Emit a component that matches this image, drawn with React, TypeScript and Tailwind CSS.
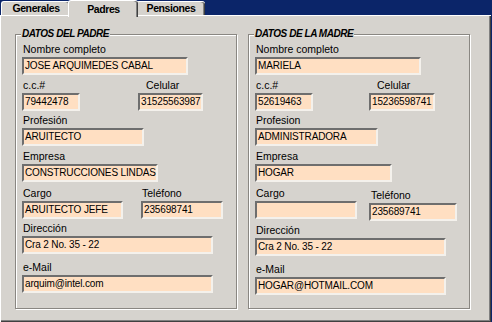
import clsx from 'clsx';

type Field = {
  label: string;
  value: string;
  w: string;
};

function Input({ value, w }: { value: string; w: string }) {
  return (
    <div
      className={clsx(
        'h-[18px] bg-[#ffdfc2] border-2 border-t-[#6e6e6e] border-l-[#6e6e6e] border-b-[#f4f1ec] border-r-[#f4f1ec] pl-px text-[10px] leading-[14px] tracking-[-0.15px] text-black whitespace-nowrap overflow-hidden',
        w,
      )}
    >
      {value}
    </div>
  );
}

function Label({ text, indent = 'pl-px' }: { text: string; indent?: string }) {
  return <div className={clsx('h-[14px] text-[10.5px] leading-[13px] text-black whitespace-nowrap', indent)}>{text}</div>;
}

function Single({ f, mt }: { f: Field; mt: string }) {
  return (
    <div className={mt}>
      <Label text={f.label} />
      <Input value={f.value} w={f.w} />
    </div>
  );
}

function Pair({ a, b, gap, bIndent, bTop = '', mt }: { a: Field; b: Field; gap: string; bIndent: string; bTop?: string; mt: string }) {
  return (
    <div className={clsx('flex', mt)}>
      <div>
        <Label text={a.label} />
        <Input value={a.value} w={a.w} />
      </div>
      <div className={clsx(gap, bTop)}>
        <Label text={b.label} indent={bIndent} />
        <Input value={b.value} w={b.w} />
      </div>
    </div>
  );
}

type Person = {
  title: string;
  nombre: Field;
  cc: Field;
  cel: Field;
  celGap: string;
  prof: Field;
  emp: Field;
  cargo: Field;
  tel: Field;
  telGap: string;
  telIndent: string;
  telTop: string;
  dir: Field;
  mail: Field;
};

function GroupBox({ p }: { p: Person }) {
  return (
    <div className="relative w-[222px] h-[275px] border border-[#8a8782] shadow-[inset_1px_1px_0_#fff,1px_1px_0_#fff] pt-[8px] pl-[6px]">
      <div className="absolute -top-[8px] left-[5px] px-px bg-[#d6d3ce] text-[10px] leading-[14px] font-bold italic tracking-[-0.45px] text-black">
        {p.title}
      </div>
      <Single f={p.nombre} mt="mt-0" />
      <Pair a={p.cc} b={p.cel} gap={p.celGap} bIndent="pl-[8px]" mt="mt-[4px]" />
      <Single f={p.prof} mt="mt-[3px]" />
      <Single f={p.emp} mt="mt-[4px]" />
      <Pair a={p.cargo} b={p.tel} gap={p.telGap} bIndent={p.telIndent} bTop={p.telTop} mt="mt-[5px]" />
      <Single f={p.dir} mt="mt-[3px]" />
      <Single f={p.mail} mt="mt-[7px]" />
    </div>
  );
}

const padre: Person = {
  title: 'DATOS DEL PADRE',
  nombre: { label: 'Nombre completo', value: 'JOSE ARQUIMEDES CABAL', w: 'w-[166px]' },
  cc: { label: 'c.c.#', value: '79442478', w: 'w-[58px]' },
  cel: { label: 'Celular', value: '31525563987', w: 'w-[65px]' },
  celGap: 'ml-[58px]',
  prof: { label: 'Profesión', value: 'ARUITECTO', w: 'w-[122px]' },
  emp: { label: 'Empresa', value: 'CONSTRUCCIONES LINDAS', w: 'w-[136px]' },
  cargo: { label: 'Cargo', value: 'ARUITECTO JEFE', w: 'w-[101px]' },
  tel: { label: 'Teléfono', value: '235698741', w: 'w-[82px]' },
  telGap: 'ml-[18px]',
  telIndent: 'pl-px',
  telTop: 'mt-0',
  dir: { label: 'Dirección', value: 'Cra 2 No. 35 - 22', w: 'w-[191px]' },
  mail: { label: 'e-Mail', value: 'arquim@intel.com', w: 'w-[191px]' },
};

const madre: Person = {
  title: 'DATOS DE LA MADRE',
  nombre: { label: 'Nombre completo', value: 'MARIELA', w: 'w-[166px]' },
  cc: { label: 'c.c.#', value: '52619463', w: 'w-[58px]' },
  cel: { label: 'Celular', value: '15236598741', w: 'w-[66px]' },
  celGap: 'ml-[56px]',
  prof: { label: 'Profesion', value: 'ADMINISTRADORA', w: 'w-[123px]' },
  emp: { label: 'Empresa', value: 'HOGAR', w: 'w-[137px]' },
  cargo: { label: 'Cargo', value: '', w: 'w-[102px]' },
  tel: { label: 'Teléfono', value: '235689741', w: 'w-[88px]' },
  telGap: 'ml-[12px]',
  telIndent: 'pl-[2px]',
  telTop: 'mt-[2px]',
  dir: { label: 'Dirección', value: 'Cra 2 No. 35 - 22', w: 'w-[191px]' },
  mail: { label: 'e-Mail', value: 'HOGAR@HOTMAIL.COM', w: 'w-[191px]' },
};

function Tab({ text, active }: { text: string; active?: boolean }) {
  return (
    <div
      className={clsx(
        'bg-[#d6d3ce] rounded-t-[3px] border-l border-t border-white shadow-[inset_-1px_0_0_#404040,inset_-2px_0_0_#808080] flex items-center justify-center text-[10.5px] font-bold tracking-[-0.4px] text-black',
        active ? 'relative z-10 -mx-[2px] -mb-[2px] h-[17px] w-[70px] pt-[2px]' : 'h-[14px] w-[69px]',
      )}
    >
      {text}
    </div>
  );
}

export default function App() {
  return (
    <div className="w-[492px] h-[322px] bg-[#0b2569] flex flex-col overflow-hidden font-['Liberation_Sans',Arial,sans-serif]">
      <div className="h-[15px] flex items-end pl-px">
        <Tab text="Generales" />
        <Tab text="Padres" active />
        <Tab text="Pensiones" />
      </div>
      <div className="flex-1 mr-px bg-[#d6d3ce] shadow-[inset_1px_1px_0_#fff,inset_-1px_-1px_0_#404040,inset_-2px_-2px_0_#808080] pt-[19px] pl-[15px] flex gap-[11px]">
        <GroupBox p={padre} />
        <GroupBox p={madre} />
      </div>
    </div>
  );
}
